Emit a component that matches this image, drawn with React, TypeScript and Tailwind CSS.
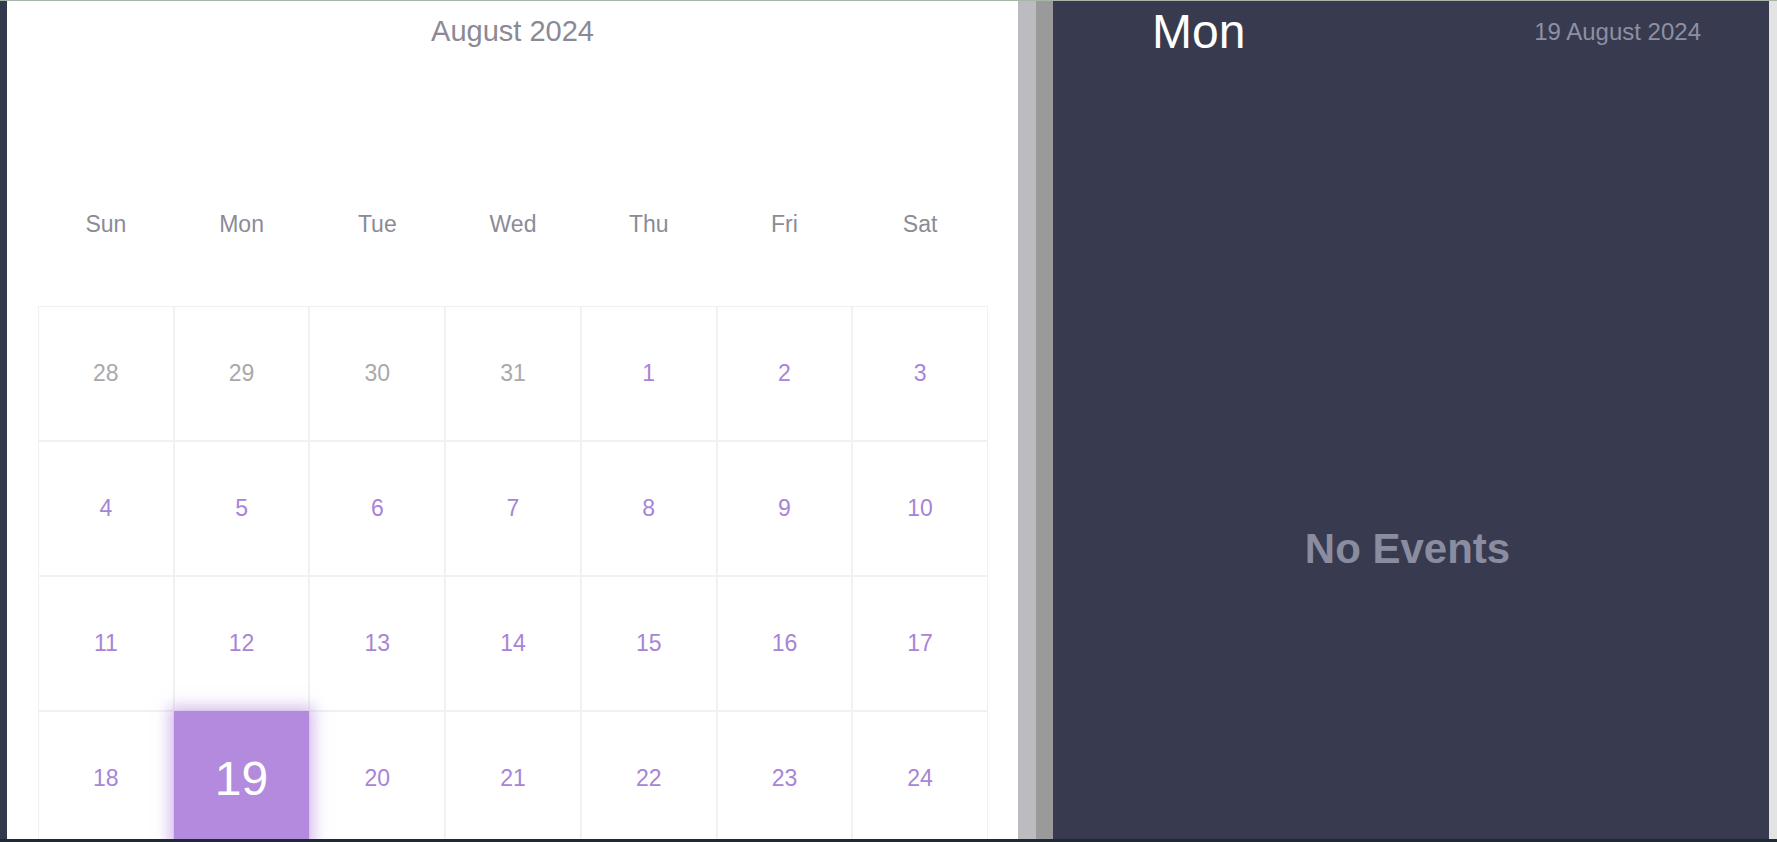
import React from 'react';

const weekDays = ['Sun', 'Mon', 'Tue', 'Wed', 'Thu', 'Fri', 'Sat'];

type Day = { n: number; muted?: boolean; selected?: boolean };

const weeks: Day[][] = [
  [{ n: 28, muted: true }, { n: 29, muted: true }, { n: 30, muted: true }, { n: 31, muted: true }, { n: 1 }, { n: 2 }, { n: 3 }],
  [{ n: 4 }, { n: 5 }, { n: 6 }, { n: 7 }, { n: 8 }, { n: 9 }, { n: 10 }],
  [{ n: 11 }, { n: 12 }, { n: 13 }, { n: 14 }, { n: 15 }, { n: 16 }, { n: 17 }],
  [{ n: 18 }, { n: 19, selected: true }, { n: 20 }, { n: 21 }, { n: 22 }, { n: 23 }, { n: 24 }],
];

const DayCell: React.FC<{ day: Day }> = ({ day }) => {
  if (day.selected) {
    return (
      <div className="relative z-10 flex h-[135px] items-center justify-center bg-[#b38ade] text-[48px] text-white shadow-[0_0_14px_5px_rgba(179,136,222,0.55)]">
        {day.n}
      </div>
    );
  }
  return (
    <div
      className={
        day.muted
          ? 'flex h-[135px] items-center justify-center border border-[#f1f1f1] text-[23px] text-[#a9a9a9]'
          : 'flex h-[135px] items-center justify-center border border-[#f1f1f1] text-[23px] text-[#a784d8]'
      }
    >
      {day.n}
    </div>
  );
};

const App: React.FC = () => {
  return (
    <div className="flex h-[842px] w-[1777px] flex-col overflow-hidden bg-[#1d2a33] font-['Liberation_Sans',Arial,sans-serif]">
      <div className="h-px bg-[#a7b6a8]" />

      <div className="flex h-[838px] overflow-hidden">
        <div className="w-[7px] bg-[#343a4e]" />

        {/* calendar */}
        <div className="w-[1011px] overflow-hidden bg-white">
          <div className="flex h-[62px] items-center justify-center text-[29px] text-[#8a8a97]">
            August 2024
          </div>

          <div className="ml-[31px] mt-[141px] grid h-[40px] w-[950px] grid-cols-7 items-center text-[23px] text-[#8b8b98]">
            {weekDays.map((d) => (
              <div key={d} className="text-center">
                {d}
              </div>
            ))}
          </div>

          <div className="ml-[31px] mt-[62px] grid w-[950px] grid-cols-7">
            {weeks.flat().map((day, i) => (
              <DayCell key={i} day={day} />
            ))}
          </div>
        </div>

        <div className="w-[18px] bg-[#bbbbc0]" />
        <div className="w-[17px] bg-[#9a9a9a]" />

        {/* day panel */}
        <div className="flex-1 bg-[#383b4f]">
          <div className="flex h-[62px] items-center justify-between pl-[99px] pr-[68px]">
            <span className="text-[48px] text-white">Mon</span>
            <span className="text-[24px] text-[#8d90a2]">19 August 2024</span>
          </div>
          <div className="mt-[454px] flex justify-center pr-[7px]">
            <span className="text-[42px] font-bold text-[#8a8d9f]">No Events</span>
          </div>
        </div>

        <div className="w-[8px] bg-[#e3e3e3]" />
      </div>

      <div className="h-[3px] bg-[#1e2b34]" />
    </div>
  );
};

export default App;
